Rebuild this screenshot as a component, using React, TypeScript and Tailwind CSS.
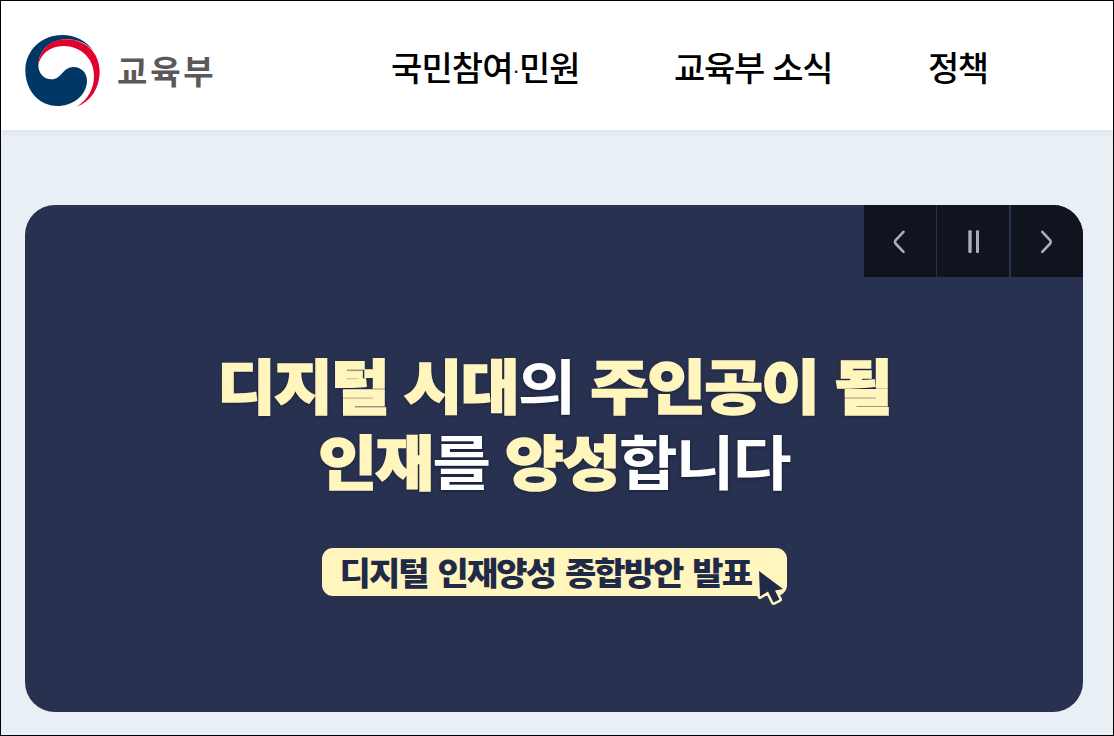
import React from "react";

function Logo() {
  return (
    <svg className="h-[73px] w-[77px] shrink-0" viewBox="72 72 231 219">
      <path
        fill="#003764"
        d="M281 123C258 91 224 75 187 75C124 75 76 122 76 181C76 242 118 288 171 288C221 288 261 254 261 212C261 188 243 171 221 171C187 171 186 208 154 208C132 208 115 190 115 166C117 119 150 91 195 88C229 86 258 98 281 123Z"
      />
      <path
        fill="#e4002e"
        d="M115 167C116 121 150 90 193 88C254 86 299 127 299 184C299 236 271 276 230 290C264 268 282 236 282 197C282 145 242 108 190 108C150 108 120 133 115 167Z"
      />
    </svg>
  );
}

function Header() {
  return (
    <header className="relative flex h-[129px] shrink-0 bg-white shadow-[0_2px_8px_rgba(40,60,100,0.07)]">
      <a href="#" className="flex w-[214px] pl-[23px] pt-[33px]">
        <Logo />
        <span className="ml-4 mt-[12px] whitespace-nowrap text-[33px] font-bold leading-[48px] tracking-[2.8px] text-[#595959]">
          교육부
        </span>
      </a>
      <nav className="flex whitespace-nowrap pt-[42px] text-[34px] font-medium leading-[48px] tracking-[-0.9px] text-black">
        <a href="#" className="ml-[176px] w-[283px]">
          국민참여
          <span className="align-[3px] font-['Liberation_Sans',sans-serif] text-[22px] leading-none">·</span>
          민원
        </a>
        <a href="#" className="w-[254px] [word-spacing:2px] tracking-[-1.3px]">
          교육부 소식
        </a>
        <a href="#" className="tracking-[-1.5px]">
          정책
        </a>
      </nav>
    </header>
  );
}

function Controls() {
  const button = "flex size-[72px] items-center justify-center bg-[#10141f]";

  return (
    <div className="absolute right-0 top-0 flex">
      <button aria-label="이전" className={`${button} mr-px`}>
        <svg width="24" height="28" fill="none" stroke="#aaaeb9" strokeWidth="2.6" strokeLinecap="round" strokeLinejoin="round">
          <path d="M15.5 4.8L7.5 13.3Q6.3 15 7.5 16.5L15.5 24.8" />
        </svg>
      </button>
      <button aria-label="정지" className={`${button} mr-0.5`}>
        <svg width="24" height="28" fill="#aaaeb9">
          <rect x="7.3" y="3.3" width="3.4" height="22.7" rx="1" />
          <rect x="15" y="3.3" width="3" height="22.7" rx="1" />
        </svg>
      </button>
      <button aria-label="다음" className={button}>
        <svg width="24" height="28" fill="none" stroke="#aaaeb9" strokeWidth="2.6" strokeLinecap="round" strokeLinejoin="round">
          <path d="M7.3 4.8L15.2 13.3Q16.4 15 15.2 16.5L7.3 24.8" />
        </svg>
      </button>
    </div>
  );
}

function Banner() {
  return (
    <section className="relative ml-6 mt-[75px] flex h-[507px] w-[1058px] flex-col items-center overflow-hidden rounded-[30px] bg-[#283250]">
      <Controls />
      <h1 className="mt-[140px] whitespace-nowrap text-center text-[64px] font-black leading-[76px] tracking-[-1.9px] text-[#fff5bd] [-webkit-text-stroke:1.6px] [text-shadow:0_1px_4px_#141a35] [word-spacing:3px]">
        <span className="block scale-y-[0.92]">
          디지털 시대<span className="font-bold text-white [-webkit-text-stroke:0]">의</span> 주인공이 될
        </span>
        <span className="block scale-y-[0.92]">
          인재<span className="font-bold text-white [-webkit-text-stroke:0]">를</span> 양성
          <span className="font-bold text-white [-webkit-text-stroke:0]">합니다</span>
        </span>
      </h1>
      <a
        href="#"
        className="relative mt-[51px] flex h-12 w-[465px] items-center whitespace-nowrap rounded-[11px] bg-[#fff5bd] pl-[18px] text-[34px] font-extrabold leading-[48px] tracking-[-1.9px] text-[#202948] [word-spacing:4px]"
      >
        <span className="scale-y-[0.93]">디지털 인재양성 종합방안 발표</span>
        <svg className="absolute left-[433px] top-[20px]" width="34" height="42" viewBox="0 0 34 42">
          <path
            d="M4 3L28 21L20 22.5L24.5 31.5L18.5 34.5L13 23.5L5 28.5Z"
            fill="#202948"
            stroke="#fff5bd"
            strokeWidth="5"
            strokeLinejoin="round"
            paintOrder="stroke"
          />
        </svg>
      </a>
    </section>
  );
}

export default function App() {
  return (
    <div className="flex h-[736px] w-[1114px] flex-col overflow-hidden border border-black bg-[#e8eff5] font-['Noto_Sans_CJK_KR',sans-serif]">
      <Header />
      <Banner />
    </div>
  );
}
